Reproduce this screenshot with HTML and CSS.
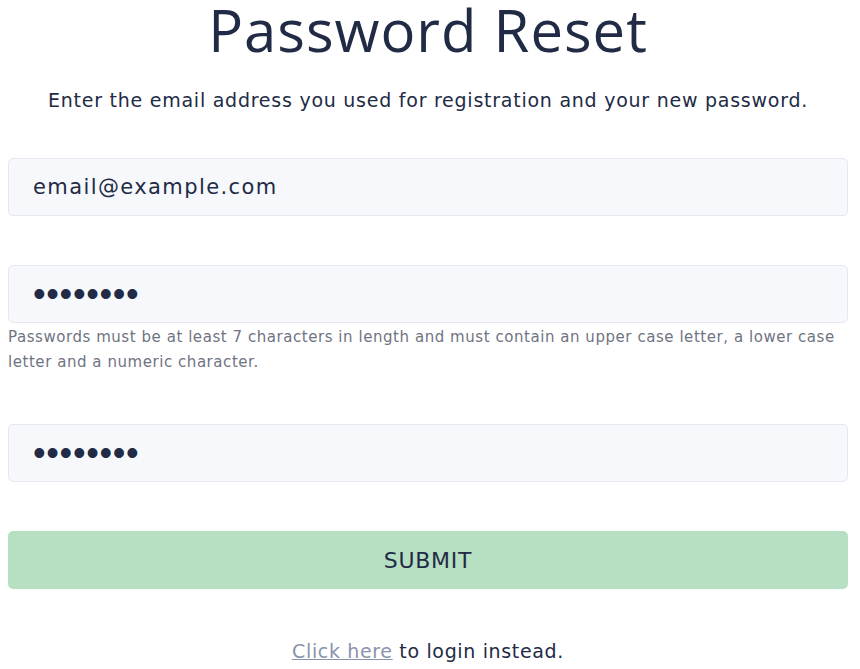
FILE: index.html
```html
<!DOCTYPE html>
<html lang="en">
<head>
    <meta charset="UTF-8">
    <meta name="viewport" content="width=device-width, initial-scale=1.0">
    <title>Password Reset</title>
    <link rel="stylesheet" href="styles.css">
</head>
<body>
    <div class="container">
        <h1>Password Reset</h1>
        <p class="intro">Enter the email address you used for registration and your new password.</p>

        <form class="reset-form">
            <div class="field">
                <input type="email" value="email@example.com">
            </div>
            <div class="field">
                <input type="password" value="password">
                <p class="hint">Passwords must be at least 7 characters in length and must contain an upper case letter, a lower case letter and a numeric character.</p>
            </div>
            <div class="field">
                <input type="password" value="password">
            </div>
            <button type="button">SUBMIT</button>
        </form>

        <p class="login-link"><a href="#">Click here</a> to login instead.</p>
    </div>
</body>
</html>
```

FILE: styles.css
```css
* {
    margin: 0;
    padding: 0;
    box-sizing: border-box;
}

body {
    margin: 0;
    padding: 0 12px 0 8px;
    font-family: 'DejaVu Sans', sans-serif;
    color: #222b45;
    background: #fff;
}

.container {
    text-align: center;
}

h1 {
    font-family: 'Open Sans', sans-serif;
    font-size: 58px;
    font-weight: 400;
    letter-spacing: 1px;
    line-height: 60px;
}

.intro {
    font-size: 19px;
    letter-spacing: 0.75px;
    line-height: 28px;
    margin-top: 26px;
}

.reset-form {
    margin-top: 44px;
    display: flex;
    flex-direction: column;
    gap: 49px;
    text-align: left;
}

input {
    display: block;
    width: 100%;
    height: 58px;
    padding: 0 24px;
    font-family: 'DejaVu Sans', sans-serif;
    font-size: 21px;
    letter-spacing: 1.4px;
    color: #222b45;
    background: #f7f8fc;
    border: 1px solid #e4e8f0;
    border-radius: 5px;
    outline: none;
}

input[type="password"] {
    font-family: 'Liberation Sans', sans-serif;
    font-size: 36px;
    letter-spacing: 0.7px;
}

.hint {
    font-size: 15px;
    letter-spacing: 0.55px;
    line-height: 25px;
    color: #6f7482;
    margin-top: 2px;
}

button {
    height: 58px;
    width: 100%;
    background: #b7e0c2;
    border: none;
    border-radius: 5px;
    font-family: 'DejaVu Sans', sans-serif;
    font-size: 22px;
    letter-spacing: 0.7px;
    color: #222b45;
    cursor: pointer;
}

.login-link {
    font-size: 19px;
    letter-spacing: 0.65px;
    line-height: 28px;
    margin-top: 48px;
}

.login-link a {
    color: #8a93ab;
}
```
